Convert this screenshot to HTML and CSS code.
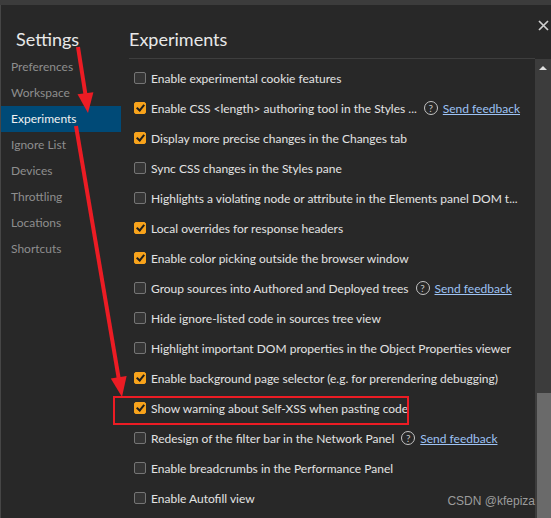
FILE: index.html
```html
<!DOCTYPE html>
<html>
<head>
    <link rel="stylesheet" href="styles.css">
</head>
<body>
<div class="topbar"></div>
<div class="window">
    <aside class="sidebar">
        <h1 class="title">Settings</h1>
        <ul class="nav">
            <li>Preferences</li>
            <li>Workspace</li>
            <li class="active">Experiments</li>
            <li>Ignore List</li>
            <li>Devices</li>
            <li>Throttling</li>
            <li>Locations</li>
            <li>Shortcuts</li>
        </ul>
    </aside>

    <main class="panel">
        <header class="panel-header">
            <h2 class="panel-title">Experiments</h2>
            <button class="close" type="button">
                <svg width="11" height="11" viewBox="0 0 11 11"><path d="M1 1 L10 10 M10 1 L1 10" stroke="#cfcfcf" stroke-width="1.7" fill="none"/></svg>
            </button>
        </header>

        <div class="panel-body">
            <ul class="experiments">
                <li class="exp"><span class="box"></span><span class="label">Enable experimental cookie features</span></li>
                <li class="exp"><span class="box checked"></span><span class="label">Enable CSS &lt;length&gt; authoring tool in the Styles ...</span><span class="help">?</span><a class="feedback" href="#">Send feedback</a></li>
                <li class="exp"><span class="box checked"></span><span class="label">Display more precise changes in the Changes tab</span></li>
                <li class="exp"><span class="box"></span><span class="label">Sync CSS changes in the Styles pane</span></li>
                <li class="exp"><span class="box"></span><span class="label">Highlights a violating node or attribute in the Elements panel DOM t...</span></li>
                <li class="exp"><span class="box checked"></span><span class="label">Local overrides for response headers</span></li>
                <li class="exp"><span class="box checked"></span><span class="label">Enable color picking outside the browser window</span></li>
                <li class="exp"><span class="box"></span><span class="label">Group sources into Authored and Deployed trees</span><span class="help">?</span><a class="feedback" href="#">Send feedback</a></li>
                <li class="exp"><span class="box"></span><span class="label">Hide ignore-listed code in sources tree view</span></li>
                <li class="exp"><span class="box"></span><span class="label">Highlight important DOM properties in the Object Properties viewer</span></li>
                <li class="exp"><span class="box checked"></span><span class="label">Enable background page selector (e.g. for prerendering debugging)</span></li>
                <li class="exp"><span class="box checked"></span><span class="label">Show warning about Self-XSS when pasting code</span></li>
                <li class="exp"><span class="box"></span><span class="label">Redesign of the filter bar in the Network Panel</span><span class="help">?</span><a class="feedback" href="#">Send feedback</a></li>
                <li class="exp"><span class="box"></span><span class="label">Enable breadcrumbs in the Performance Panel</span></li>
                <li class="exp"><span class="box"></span><span class="label">Enable Autofill view</span></li>
            </ul>
            <div class="scrollbar">
                <span class="arrow-up"></span>
                <span class="thumb"></span>
            </div>
        </div>
    </main>
</div>

<!-- red annotations drawn over the screenshot -->
<svg class="annotations" width="551" height="518" viewBox="0 0 551 518">
    <g fill="#ec1c24" stroke="#ec1c24">
        <line x1="78" y1="47" x2="86" y2="98" stroke-width="4"/>
        <polygon points="93.4,92.2 77.5,94.2 88,113" stroke="none"/>
        <line x1="76" y1="126" x2="119" y2="380" stroke-width="4"/>
        <polygon points="126.6,376 110.8,378.6 122,397" stroke="none"/>
    </g>
    <rect x="114" y="397" width="294" height="27" fill="none" stroke="#ec1c24" stroke-width="2"/>
</svg>

<div class="watermark">CSDN @kfepiza</div>
</body>
</html>
```

FILE: styles.css
```css
*{
    margin: 0;
    padding: 0;
    box-sizing: border-box;
}
body {
    width: 551px;
    height: 518px;
    overflow: hidden;
    background-color: #282828;
    color: #e3e3e3;
    font-family: Lato, "Noto Sans", sans-serif;
    font-size: 12px;
    position: relative;
}

.topbar {
    height: 5px;
    background: #3c3c3c;
}

.window {
    display: flex;
    height: 513px;
    border-left: 1px solid #464646;
}

/* left column */
.sidebar {
    width: 120px;
    flex-shrink: 0;
}

.title {
    font-size: 18px;
    font-weight: normal;
    line-height: 24px;
    margin: 22px 0 3px 15px;
    color: #e8e8e8;
}

.nav {
    list-style: none;
}

.nav li {
    height: 26px;
    line-height: 26px;
    padding-left: 10px;
    color: #8e8e8e;
}

.nav li.active {
    background: #004a77;
    color: #f2f2f2;
}

/* right column */
.panel {
    flex: 1;
    display: flex;
    flex-direction: column;
    min-width: 0;
}

.panel-header {
    display: flex;
    padding-left: 8px;
}

.panel-title {
    flex: 1;
    font-size: 18px;
    font-weight: normal;
    line-height: 24px;
    padding: 22px 0 7px 0;
    border-bottom: 1px solid #3e3e3e;
    color: #e8e8e8;
}

.close {
    width: 16px;
    height: 11px;
    margin-top: 15px;
    background: none;
    border: none;
    display: flex;
    justify-content: center;
}

.panel-body {
    flex: 1;
    display: flex;
    min-height: 0;
}

.experiments {
    flex: 1;
    list-style: none;
    padding: 4px 0 0 13px;
    overflow: hidden;
}

.exp {
    height: 30px;
    display: flex;
    align-items: center;
    white-space: nowrap;
}

.box {
    width: 12px;
    height: 12px;
    border: 1px solid #757575;
    border-radius: 2px;
    background: #353535;
    margin-right: 5px;
    flex-shrink: 0;
    position: relative;
}

.box.checked {
    background: #f8a31b;
    border-color: #f8a31b;
}

.box.checked::after {
    content: "";
    position: absolute;
    left: 3px;
    top: 0px;
    width: 3px;
    height: 6px;
    border: solid #1e1e1e;
    border-width: 0 2px 2px 0;
    transform: rotate(40deg);
}

.help {
    width: 14px;
    height: 14px;
    border: 1px solid #c4c4c4;
    border-radius: 50%;
    font-size: 10px;
    line-height: 12px;
    text-align: center;
    color: #c4c4c4;
    margin-left: 7px;
    flex-shrink: 0;
}

.feedback {
    color: #9dc2f4;
    margin-left: 5px;
}

.scrollbar {
    width: 16px;
    flex-shrink: 0;
    background: #3c3c3c;
    display: flex;
    flex-direction: column;
    align-items: center;
}

.arrow-up {
    margin-top: 7px;
    width: 0;
    height: 0;
    border-left: 4px solid transparent;
    border-right: 4px solid transparent;
    border-bottom: 4px solid #e0e0e0;
}

.thumb {
    margin-top: auto;
    width: 14px;
    height: 125px;
    margin-left: 1px;
    background: #6a6a6a;
}

.annotations {
    position: absolute;
    top: 0;
    left: 0;
    pointer-events: none;
}

.watermark {
    position: absolute;
    right: 16px;
    bottom: 10px;
    font-family: "Liberation Sans", Arial, sans-serif;
    font-size: 12px;
    line-height: 14px;
    color: #9c9c9c;
}
```
